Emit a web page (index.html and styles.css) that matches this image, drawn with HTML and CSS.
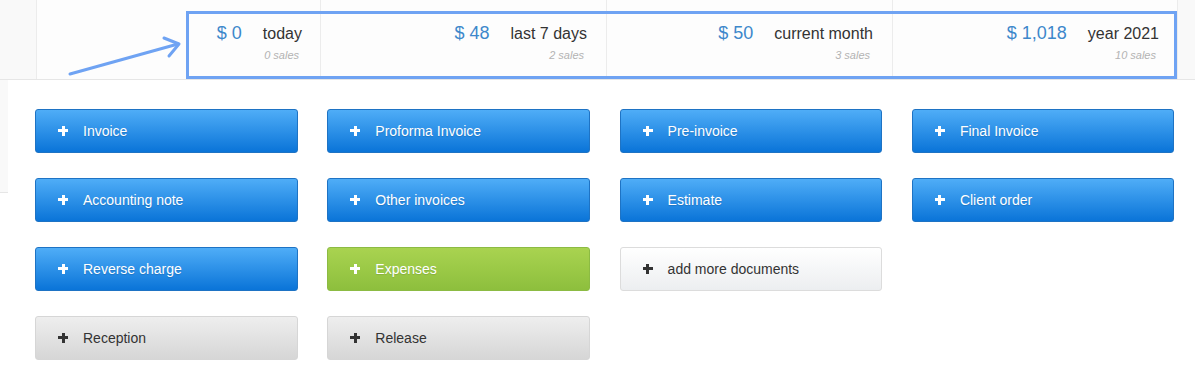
FILE: index.html
```html
<!DOCTYPE html>
<html>
<head>
<meta charset="utf-8">
<link rel="stylesheet" href="styles.css">
</head>
<body>
<div class="page">
  <div class="topbar">
    <div class="stats">
      <div class="stat">
        <div class="stat-main"><span class="amount">$ 0</span><span class="label">today</span></div>
        <div class="sales">0 sales</div>
      </div>
      <div class="stat">
        <div class="stat-main"><span class="amount">$ 48</span><span class="label">last 7 days</span></div>
        <div class="sales">2 sales</div>
      </div>
      <div class="stat">
        <div class="stat-main"><span class="amount">$ 50</span><span class="label">current month</span></div>
        <div class="sales">3 sales</div>
      </div>
      <div class="stat">
        <div class="stat-main"><span class="amount">$ 1,018</span><span class="label">year 2021</span></div>
        <div class="sales">10 sales</div>
      </div>
    </div>
    <div class="highlight"></div>
    <svg class="arrow" width="130" height="50" viewBox="0 0 130 50">
      <path d="M2 44 L110 14" stroke="#6fa3f3" stroke-width="3" fill="none" stroke-linecap="round"/>
      <path d="M96 8 L111 14 L101 26" stroke="#6fa3f3" stroke-width="3" fill="none" stroke-linecap="round" stroke-linejoin="round"/>
    </svg>
  </div>
  <div class="content">
    <div class="side-strip"></div>
    <div class="grid">
      <a class="btn blue"><span class="plus"></span>Invoice</a>
      <a class="btn blue"><span class="plus"></span>Proforma Invoice</a>
      <a class="btn blue"><span class="plus"></span>Pre-invoice</a>
      <a class="btn blue"><span class="plus"></span>Final Invoice</a>
      <a class="btn blue"><span class="plus"></span>Accounting note</a>
      <a class="btn blue"><span class="plus"></span>Other invoices</a>
      <a class="btn blue"><span class="plus"></span>Estimate</a>
      <a class="btn blue"><span class="plus"></span>Client order</a>
      <a class="btn blue"><span class="plus"></span>Reverse charge</a>
      <a class="btn green"><span class="plus"></span>Expenses</a>
      <a class="btn light"><span class="plus"></span>add more documents</a>
      <span></span>
      <a class="btn gray"><span class="plus"></span>Reception</a>
      <a class="btn gray"><span class="plus"></span>Release</a>
    </div>
  </div>
</div>
</body>
</html>
```

FILE: styles.css
```css
* { box-sizing: border-box; }
html, body { margin: 0; padding: 0; background: #ffffff; }
body { font-family: "Liberation Sans", Arial, sans-serif; width: 1195px; height: 378px; overflow: hidden; }

.page { position: relative; }

.topbar {
  position: relative;
  height: 80px;
  background: #f9f9f9;
  border-bottom: 1px solid #e6e6e6;
  padding-left: 36px;
}

.stats {
  display: flex;
  width: 1142px;
  height: 79px;
  background: #fdfdfd;
  border-left: 1px solid #ececec;
  border-right: 1px solid #ececec;
}

.stat {
  flex: 1;
  display: flex;
  flex-direction: column;
  align-items: flex-end;
  padding: 23px 19px 0 0;
  border-right: 1px solid #ececec;
}
.stat:last-child { border-right: none; padding-right: 18px; }
.stat:first-child { flex: 0 0 284px; padding-right: 18px; }

.stat-main { display: flex; align-items: baseline; gap: 21px; }
.amount { color: #3d88cb; font-size: 18px; }
.label { color: #333; font-size: 16px; }
.sales { color: #b3b3b3; font-size: 11px; font-style: italic; margin-top: 5px; margin-right: 3px; }

.highlight {
  position: absolute;
  left: 186px;
  top: 11px;
  width: 991px;
  height: 68px;
  border: 3px solid #6fa3f3;
}

.arrow { position: absolute; left: 68px; top: 30px; }

.content { position: relative; padding: 29px 0 0 35px; }

.side-strip {
  position: absolute;
  left: 0;
  top: 0;
  width: 8px;
  height: 113px;
  background: #f9f9f9;
  border-bottom: 1px solid #e6e6e6;
}

.grid {
  display: grid;
  grid-template-columns: repeat(4, 262.5px);
  grid-auto-rows: 44px;
  column-gap: 29.8px;
  row-gap: 25px;
}

.btn {
  display: flex;
  align-items: center;
  padding-left: 22px;
  border-radius: 3px;
  font-size: 14px;
  color: #fff;
  text-decoration: none;
  border: 1px solid transparent;
}
.plus {
  position: relative;
  flex: 0 0 10px;
  height: 10px;
  margin-right: 15px;
  margin-top: -1px;
}
.plus::before, .plus::after {
  content: "";
  position: absolute;
  background: currentColor;
}
.plus::before { left: 0; top: 3.5px; width: 10px; height: 3px; }
.plus::after { left: 3.5px; top: 0; width: 3px; height: 10px; }

.blue {
  background: linear-gradient(#4fadf7, #0a74d8);
  border-color: #1e73c4;
  text-shadow: 0 1px 1px rgba(0,0,0,0.15);
}
.green {
  background: linear-gradient(#a9d350, #8dbf3d);
  border-color: #8cbb43;
  text-shadow: 0 1px 1px rgba(0,0,0,0.12);
}
.light {
  background: linear-gradient(#ffffff, #eceef0);
  border-color: #dcdcdc;
  color: #333;
}
.gray {
  background: linear-gradient(#eeeeee, #d6d6d6);
  border-color: #d6d6d6;
  color: #333;
}
```
